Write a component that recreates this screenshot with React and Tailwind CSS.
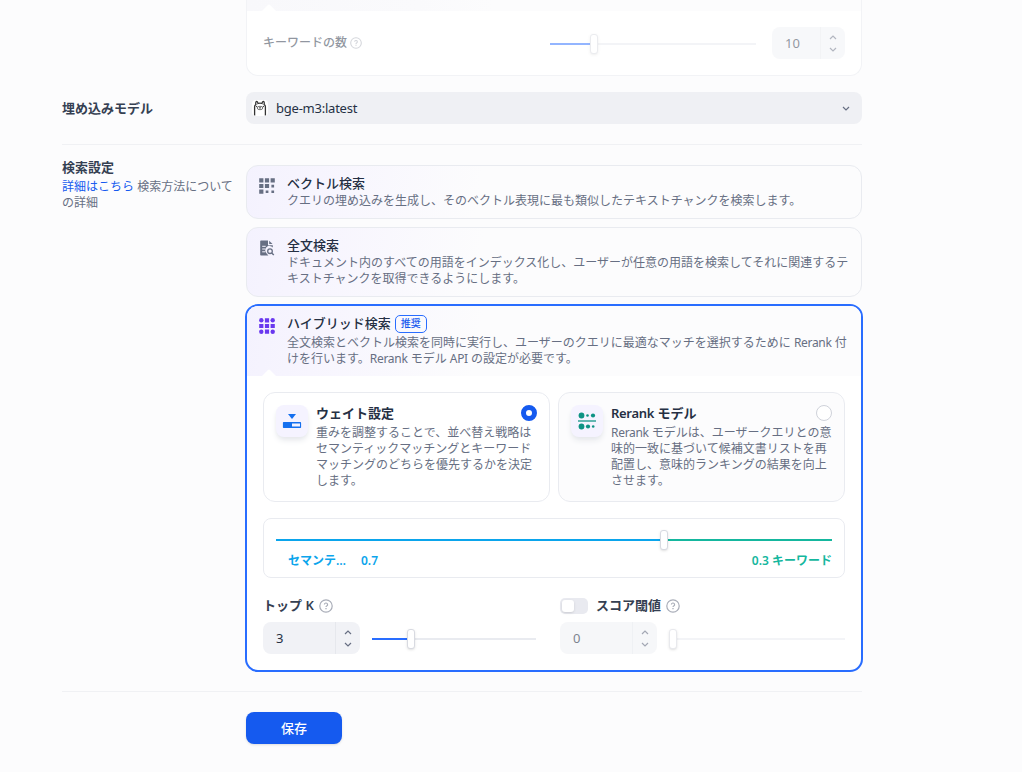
import React from 'react';

const HelpIcon = ({ className = 'h-3.5 w-3.5' }) => (
  <svg viewBox="0 0 14 14" className={`shrink-0 ${className}`} fill="none" stroke="#a9adb8">
    <circle cx="7" cy="7" r="6.2" strokeWidth="1.2" />
    <path d="M5.4 5.6a1.6 1.6 0 1 1 2.3 1.45c-.5.25-.7.5-.7 1.05" strokeWidth="1.2" />
    <path d="M7 9v1.3" strokeWidth="1.3" />
  </svg>
);

const Chevron = ({ up = false }) => (
  <svg viewBox="0 0 8 5" className="h-[5px] w-2" fill="none" stroke="#676f83" strokeWidth="1.2">
    <path d={up ? 'M1 4l3-3 3 3' : 'M1 1l3 3 3-3'} />
  </svg>
);

const VectorIcon = () => (
  <svg viewBox="0 0 16 16" className="h-4 w-4" fill="#676f83">
    <path d="M.2.2h4.2v4.2H.2zM5.9.2h4.2v4.2H5.9zM11.6.2h4.2v4.2h-4.2zM.2 5.9h4.2v4.2H.2zM5.9 5.9h4.2v4.2H5.9zM12.4 6.7h2.7v2.7h-2.7zM.2 11.6h4.2v4.2H.2zM6.7 12.4h2.7v2.7H6.7zM12.4 12.4h2.7v2.7h-2.7z" />
  </svg>
);

const FullTextIcon = () => (
  <svg viewBox="0 0 16 16" className="h-4 w-4" fill="none">
    <path d="M2 .5h7v4.8h4.8v2.1A4 4 0 0 0 7.2 13l2.2 2.5H2a.8.8 0 0 1-.8-.8V1.3A.8.8 0 0 1 2 .5z" fill="#676f83" />
    <path d="M10.2.8l3.3 3.3h-3.3z" fill="#676f83" />
    <path d="M3.2 6.3h3.5M3.2 9h3M3.2 11.8h3" stroke="#f5f3fe" strokeWidth="1" />
    <circle cx="11" cy="11.2" r="2.3" stroke="#676f83" strokeWidth="1.3" />
    <path d="M12.7 13l2.1 2.1" stroke="#676f83" strokeWidth="1.4" />
  </svg>
);

const HybridIcon = () => (
  <svg viewBox="0 0 16 16" className="h-4 w-4" fill="#6938ef">
    <circle cx="2.3" cy="2.3" r="2.2" />
    <circle cx="13.7" cy="2.3" r="2.2" />
    <circle cx="2.3" cy="13.7" r="2.2" />
    <circle cx="13.7" cy="13.7" r="2.2" />
    <path d="M5.9.2h4.2v4.2H5.9zM.2 5.9h4.2v4.2H.2zM5.9 5.9h4.2v4.2H5.9zM11.6 5.9h4.2v4.2h-4.2zM5.9 11.6h4.2v4.2H5.9z" />
  </svg>
);

const WeightIcon = () => (
  <svg viewBox="0 0 20 20" className="h-5 w-5" fill="#1570ef">
    <path d="M6 3h8l-4 5z" />
    <path fillRule="evenodd" d="M1.6 11h16.8c.4 0 .7.3.7.7v4.6c0 .4-.3.7-.7.7H1.6a.7.7 0 0 1-.7-.7v-4.6c0-.4.3-.7.7-.7zM10 12.4v3h8v-3z" />
  </svg>
);

const RerankIcon = () => (
  <svg viewBox="0 0 20 20" className="h-5 w-5" fill="#0e9384">
    <circle cx="4.5" cy="4.5" r="2.9" />
    <circle cx="10.5" cy="4.5" r="1.3" />
    <circle cx="16" cy="4.5" r="2.1" />
    <path d="M1 9.2h18v1.6H1z" opacity=".85" />
    <circle cx="4.5" cy="15.5" r="2.9" />
    <circle cx="11" cy="15.5" r="2.1" />
    <circle cx="16.2" cy="15.5" r="1.3" />
  </svg>
);

const LlamaIcon = () => (
  <svg viewBox="0 0 16 16" className="h-4 w-4 rounded bg-white" fill="none" stroke="#333" strokeWidth="1.3">
    <path d="M2.6 15.5V6.8c0-1 .5-1.7 1.3-2.1-.3-1.6-.1-3.2.7-3.4.9 0 1.3 1 1.4 2.2 1.3-.5 2.7-.5 4 0 .1-1.2.5-2.2 1.4-2.2.8.2 1 1.8.7 3.4.8.4 1.3 1.1 1.3 2.1v8.7" />
    <ellipse cx="8" cy="8" rx="2.8" ry="1.7" strokeWidth=".9" stroke="#666" />
    <path d="M7 7.9h2M4 6.6h1.2M10.8 6.6H12" strokeWidth="1" />
  </svg>
);

const Knob = ({ className }) => (
  <span className={`absolute -top-[9px] h-5 w-2 rounded-[3px] border border-[#d8dae1] bg-white shadow-sm ${className}`} />
);

const Latin = ({ children }) => <span className="tracking-[-0.3px]">{children}</span>;

const NumberInput = ({ value, className }) => (
  <div className={`flex h-8 overflow-hidden rounded-lg bg-[#f1f2f6] text-[13px] text-[#253044] ${className}`}>
    <div className="flex flex-1 items-center pt-0.5 pl-[13px]">{value}</div>
    <div className="flex w-[25px] flex-col items-center justify-center gap-[7px] border-l border-[#e6e8ed]">
      <Chevron up />
      <Chevron />
    </div>
  </div>
);

const Option = ({ icon, title, children, className }) => (
  <div className={`flex rounded-xl border border-[#e9ebf0] bg-[linear-gradient(100deg,#f4f2fe_0%,#f7f5fe_12%,#fcfcfd_38%)] pt-[7px] pl-3 ${className}`}>
    <div className="mt-[5px] w-4 shrink-0">{icon}</div>
    <div className="ml-3 w-[564px]">
      <div className="h-5 text-[13px] leading-5 font-medium text-[#253044]">{title}</div>
      <p className="text-xs leading-4 text-[#676f83]">{children}</p>
    </div>
  </div>
);

const Method = ({ icon, title, selected = false, children }) => (
  <div className={`flex h-[110px] w-[287px] rounded-xl border border-[#e9ebf0] pt-3 pl-3 ${selected ? 'bg-white' : 'bg-[#fcfcfd]'}`}>
    <div className="flex h-8 w-8 shrink-0 items-center justify-center rounded-lg bg-[#f5f3ff] shadow-md shadow-gray-200">{icon}</div>
    <div className="-mt-0.5 ml-2 w-[222px]">
      <div className="flex h-[22px] items-center justify-between text-[13px] font-semibold text-[#253044]">
        <span>{title}</span>
        <span className={`mr-px mb-0.5 h-4 w-4 rounded-full bg-white ${selected ? 'border-[5px] border-[#155aef]' : 'border border-[#cfd2da]'}`} />
      </div>
      <p className="w-[221px] text-xs leading-4 text-[#676f83]">{children}</p>
    </div>
  </div>
);

export default function App() {
  return (
    <div lang="ja" className="h-[772px] overflow-hidden bg-[#fcfcfd] pl-[62px] font-['Noto_Sans','Noto_Sans_CJK_JP',sans-serif]">
      <div className="w-[800px]">
        <section className="ml-[184px] h-[76px] overflow-hidden rounded-b-xl border border-t-0 border-[#f2f3f6] bg-white">
          <div className="relative h-[11px] bg-[linear-gradient(90deg,#f8f8fb,#fafafc_28%,#fcfcfd_40%)]">
            <svg viewBox="0 0 14 7" className="absolute bottom-0 left-[15px] h-[7px] w-3.5" fill="#fff"><path d="M0 7l6-6q1-1 2 0l6 6z" /></svg>
          </div>
          <div className="flex h-16 items-center pr-4 pl-4 opacity-50">
            <span className="text-xs font-medium text-[#253044]">キーワードの数</span>
            <HelpIcon className="ml-[3px] h-3 w-3" />
            <div className="relative mt-0.5 ml-auto h-0.5 w-[206px] bg-[#e9ebf0]">
              <div className="h-0.5 w-10 bg-[#296dff]" />
              <Knob className="left-10" />
            </div>
            <NumberInput value="10" className="ml-4 w-[73px]" />
          </div>
        </section>

        <section className="mt-4 flex items-center">
          <h2 className="w-[184px] pt-0.5 text-[13px] font-semibold text-[#354052]">埋め込みモデル</h2>
          <div className="flex h-8 flex-1 items-center rounded-lg bg-[#eff0f4] pr-3 pl-1.5 text-[13px] text-[#253044]">
            <LlamaIcon />
            <span className="ml-2 flex-1 pt-0.5 tracking-[-0.23px]">bge-m3:latest</span>
            <Chevron />
          </div>
        </section>

        <div className="mt-5 h-px bg-[#f0f1f4]" />

        <section className="mt-3 flex">
          <div className="w-[184px] shrink-0">
            <h2 className="text-[13px] leading-5 font-semibold text-[#354052]">検索設定</h2>
            <p className="mt-0.5 w-[175px] text-xs leading-4 text-[#676f83]">
              <a className="text-[#155aef]">詳細はこちら</a> 検索方法についての詳細
            </p>
          </div>
          <div className="mt-2 w-[616px]">
            <Option icon={<VectorIcon />} title="ベクトル検索" className="h-[54px]">
              クエリの埋め込みを生成し、そのベクトル表現に最も類似したテキストチャンクを検索します。
            </Option>
            <Option icon={<FullTextIcon />} title="全文検索" className="mt-2 h-[70px]">
              ドキュメント内のすべての用語をインデックス化し、ユーザーが任意の用語を検索してそれに関連するテキストチャンクを取得できるようにします。
            </Option>

            <div className="-mx-px mt-[7px] h-[368px] overflow-hidden rounded-[13px] border-2 border-[#296dff] bg-white">
              <div className="relative flex h-[70px] bg-[linear-gradient(100deg,#f4f2fe_0%,#f7f5fe_12%,#fcfcfd_38%)] pt-2 pl-3">
                <div className="mt-1 w-4">
                  <HybridIcon />
                </div>
                <div className="ml-3 w-[564px]">
                  <div className="flex h-5 items-center text-[13px] font-medium text-[#253044]">
                    ハイブリッド検索
                    <span className="ml-1 flex h-[18px] w-8 items-center justify-center rounded-[5px] border border-[#296dff] pb-px text-[10px] text-[#155aef]">推奨</span>
                  </div>
                  <p className="mt-px text-xs leading-4 text-[#676f83]">
                    全文検索とベクトル検索を同時に実行し、ユーザーのクエリに最適なマッチを選択するために <Latin>Rerank</Latin> 付けを行います。<Latin>Rerank</Latin> モデル <Latin>API</Latin> の設定が必要です。
                  </p>
                </div>
                <svg viewBox="0 0 14 7" className="absolute bottom-0 left-[15px] h-[7px] w-3.5" fill="#fff"><path d="M0 7l6-6q1-1 2 0l6 6z" /></svg>
              </div>

              <div className="px-4 pt-4">
                <div className="flex gap-2">
                  <Method icon={<WeightIcon />} title="ウェイト設定" selected>
                    重みを調整することで、並べ替え戦略はセマンティックマッチングとキーワードマッチングのどちらを優先するかを決定します。
                  </Method>
                  <Method icon={<RerankIcon />} title={<><Latin>Rerank</Latin> モデル</>}>
                    <Latin>Rerank</Latin> モデルは、ユーザークエリとの意味的一致に基づいて候補文書リストを再配置し、意味的ランキングの結果を向上させます。
                  </Method>
                </div>

                <div className="mt-4 h-[60px] rounded-lg border border-[#e9ebf0] px-3 pt-5">
                  <div className="relative flex h-0.5">
                    <div className="w-[388px] bg-[#0ba5ec]" />
                    <div className="flex-1 bg-[#15b79e]" />
                    <Knob className="left-[384px]" />
                  </div>
                  <div className="mt-3 flex justify-between text-xs leading-4 font-semibold">
                    <div className="flex text-[#0ba5ec]">
                      <span className="ml-3 w-[73px]">セマンテ<span className="tracking-[0.5px]">…</span></span>
                      <span>0.7</span>
                    </div>
                    <span className="text-[#15b79e]">0.3 キーワード</span>
                  </div>
                </div>

                <div className="mt-[18px] flex">
                  <div className="w-[297px]">
                    <div className="flex h-5 items-center text-[13px] font-semibold text-[#354052]">
                      トップ K <HelpIcon className="ml-[5px] h-3.5 w-3.5" />
                    </div>
                    <div className="mt-1.5 flex items-center">
                      <NumberInput value="3" className="w-[97px]" />
                      <div className="relative mt-0.5 ml-3 h-0.5 w-[164px] bg-[#e9ebf0]">
                        <div className="h-0.5 w-[35px] bg-[#296dff]" />
                        <Knob className="left-[35px]" />
                      </div>
                    </div>
                  </div>
                  <div className="w-[285px]">
                    <div className="flex h-5 items-center text-[13px] font-semibold text-[#354052]">
                      <span className="mr-2 flex h-4 w-7 rounded-[5px] bg-[#e9eaf0] p-0.5">
                        <span className="h-3 w-3 rounded-[3px] bg-white shadow-sm" />
                      </span>
                      スコア閾値 <HelpIcon className="ml-[5px] h-3.5 w-3.5" />
                    </div>
                    <div className="mt-1.5 flex items-center">
                      <NumberInput value="0" className="w-[97px] opacity-60" />
                      <div className="relative mt-0.5 ml-3 h-0.5 flex-1 bg-[#f3f4f7]">
                        <Knob className="left-0 border-[#e8e9ed]" />
                      </div>
                    </div>
                  </div>
                </div>
              </div>
            </div>
          </div>
        </section>

        <div className="mt-[19px] h-px bg-[#f0f1f4]" />
        <button className="mt-5 ml-[184px] flex h-8 w-24 items-center justify-center rounded-lg bg-[#155aef] pt-px text-[13px] font-medium text-white shadow-sm">保存</button>
      </div>
    </div>
  );
}
